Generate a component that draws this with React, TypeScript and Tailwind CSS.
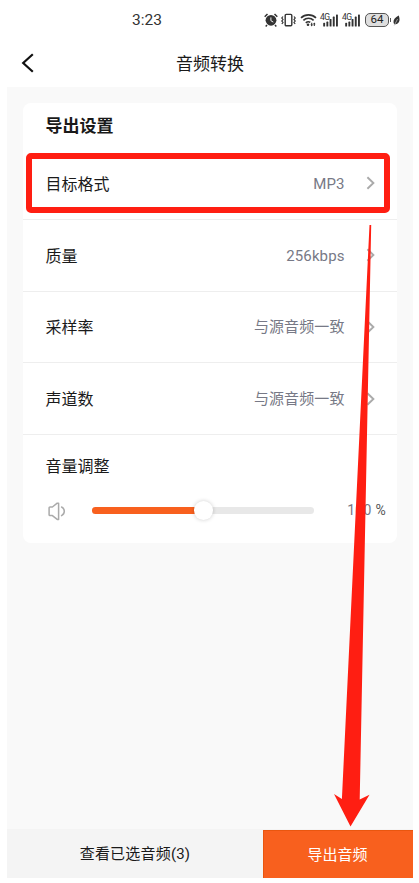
interface SettingRow {
  label: string;
  value: string;
}

const rows: SettingRow[] = [
  { label: '目标格式', value: 'MP3' },
  { label: '质量', value: '256kbps' },
  { label: '采样率', value: '与源音频一致' },
  { label: '声道数', value: '与源音频一致' }
];

function AlarmIcon() {
  return (
    <svg width="14" height="14" viewBox="0 0 14 14" fill="none">
      <circle cx="7" cy="7.3" r="5.4" fill="#333" />
      <path d="M0.7 3.8 3.5 1M13.3 3.8 10.5 1M3 12l-1.3 1.4M11 12l1.3 1.4" stroke="#333" strokeWidth="1.5" />
      <path d="M6.9 4.4v3.3l2.4 1.4" stroke="#eee" strokeWidth="1" />
    </svg>
  );
}

function VibrateIcon() {
  return (
    <svg width="15" height="14" viewBox="0 0 15 14" fill="none" stroke="#333">
      <rect x="4.2" y="1.4" width="6.6" height="11.4" rx="1" strokeWidth="1.4" />
      <path d="M2 3.5 .8 5 2 6.5.8 8 2 9.5.8 11M13 3.5 14.2 5 13 6.5 14.2 8 13 9.5l1.2 1.5" strokeWidth="1.2" />
    </svg>
  );
}

function WifiIcon() {
  return (
    <svg width="17" height="14" viewBox="0 0 17 14" fill="none" stroke="#333" strokeWidth="1.6">
      <path d="M1 4.9a10.7 10.7 0 0 1 15 0M3.4 7.4a7.2 7.2 0 0 1 10.2 0M5.8 9.8a4 4 0 0 1 4.5-.6" />
      <circle cx="8" cy="11.8" r="1.3" fill="#333" stroke="none" />
      <path d="M11.7 9.7v2.8M14.3 13v-2.8" strokeWidth="1.1" />
      <path d="m10.4 11.6 1.3 1.8 1.2-1.8zM13.1 11.2l1.2-1.8 1.3 1.8z" fill="#333" stroke="none" />
    </svg>
  );
}

function SignalIcon() {
  return (
    <div className="relative h-[14px] w-[19px]">
      <svg width="19" height="14" viewBox="0 0 19 14" fill="#333">
        <rect x="3.2" y="9.8" width="1.9" height="3.7" rx=".6" />
        <rect x="6.4" y="8.6" width="1.9" height="4.9" rx=".6" />
        <rect x="9.6" y="6" width="1.9" height="7.5" rx=".6" />
        <rect x="12.8" y="3.6" width="1.9" height="9.9" rx=".6" />
        <rect x="16" y="1.4" width="1.9" height="12.1" rx=".6" />
      </svg>
      <span className="absolute top-0 left-0 font-[Roboto,sans-serif] text-[8.5px] leading-[8px] tracking-[-0.6px] text-[#333]">4G</span>
    </div>
  );
}

function BatteryIcon() {
  return (
    <div className="flex items-center">
      <div className="flex h-[14px] w-6 items-center justify-center rounded-[5px] border border-[#555] bg-[#dedede] font-[Roboto,sans-serif] text-[11.5px] leading-none text-[#222]">
        64
      </div>
      <div className="ml-px h-1 w-px bg-[#555]" />
    </div>
  );
}

function LeafIcon() {
  return (
    <svg width="7" height="11" viewBox="0 0 7 11" fill="#333">
      <path d="M5.7.5C2.2 2.2.3 4.5.5 7.2c.1 1 .5 1.8 1 2.3C4.8 9.4 6.9 7 6.5 3.8 6.4 2.4 6 1.2 5.7.5z" />
      <path d="M1 10.8 4.6 4" stroke="#ccc" strokeWidth=".7" />
    </svg>
  );
}

function SpeakerIcon() {
  return (
    <svg width="18" height="20" viewBox="0 0 18 20" fill="none" stroke="#aaa" strokeWidth="1.5" strokeLinecap="round" strokeLinejoin="round">
      <path d="M10.6 2.2v16.2H9.2L4.4 14.6H2a.9.9 0 0 1-.9-.9V6.9A.9.9 0 0 1 2 6h2.4l4.8-3.8z" />
      <path d="M13.6 6c1.9 1 2.7 2.5 2.7 4.3s-.8 3.3-2.7 4.3" />
    </svg>
  );
}

function ChevronIcon() {
  return (
    <svg width="9" height="14" viewBox="0 0 9 14" fill="none" stroke="#aaa" strokeWidth="1.9">
      <path d="m1.4 1.2 6 5.8-6 5.8" />
    </svg>
  );
}

function StatusBar() {
  return (
    <div className="flex h-10 items-center pr-[19px] pl-[132px]">
      <span className="pt-px font-[Roboto,sans-serif] text-[15.5px] leading-none text-[#333]">3:23</span>
      <div className="ml-auto flex items-center">
        <AlarmIcon />
        <div className="ml-[3px]"><VibrateIcon /></div>
        <div className="ml-1"><WifiIcon /></div>
        <div className="ml-[3px]"><SignalIcon /></div>
        <div className="ml-[3px]"><SignalIcon /></div>
        <div className="ml-1"><BatteryIcon /></div>
        <div className="ml-[2px]"><LeafIcon /></div>
      </div>
    </div>
  );
}

function VolumeRow() {
  return (
    <div className="pt-[18px] pr-[11px] pl-[22.5px]">
      <div className="text-[16px] leading-6">音量调整</div>
      <div className="mt-[23px] flex h-5 items-center">
        <div className="ml-[2px] shrink-0 pt-px"><SpeakerIcon /></div>
        <div className="relative ml-[26.5px] h-[7px] w-[222px] shrink-0 rounded-full bg-[#e8e8e8]">
          <div className="h-full w-1/2 rounded-full bg-[#f8601e]" />
          <div className="absolute -top-[6px] left-[102px] size-[19px] rounded-full bg-white shadow-[0_0_4px_rgba(0,0,0,0.2)]" />
        </div>
        <span className="ml-auto font-[Roboto,sans-serif] text-[14px] leading-5 tracking-[0.3px] whitespace-nowrap text-[#777986]">
          100 <span className="text-[#555]">%</span>
        </span>
      </div>
    </div>
  );
}

export default function App() {
  return (
    <div className="relative flex h-[883px] w-[419px] flex-col overflow-hidden bg-white pb-[5px] font-['Noto_Sans_CJK_SC',sans-serif] text-[#1a1a1a]">
      <StatusBar />
      <header className="grid h-[47px] grid-cols-[1fr_auto_1fr] items-center pb-px pl-[21px]">
        <svg width="14" height="20" viewBox="0 0 14 20" fill="none" stroke="#111" strokeWidth="2.2">
          <path d="M11.8 1.2 2.2 10l9.6 8.8" />
        </svg>
        <h1 className="-ml-[20px] text-[17px] leading-6">音频转换</h1>
      </header>

      <main className="mr-[6px] ml-[7px] flex-1 bg-[#f9f9f9] px-4 pt-4">
        <section className="h-[440px] rounded-lg bg-white">
          <h2 className="h-[45px] px-[22.5px] pt-[10px] text-[17px] leading-6 font-bold">导出设置</h2>
          {rows.map((row) => (
            <div key={row.label} className="flex h-[71.75px] items-center border-b border-[#eee] pr-[22.5px] pl-[22.5px]">
              <span className="pb-px text-[16px] leading-6">{row.label}</span>
              <span className="ml-auto pt-px font-[Roboto,'Noto_Sans_CJK_SC',sans-serif] text-[15px] leading-6 tracking-[0.1px] text-[#777986]">{row.value}</span>
              <span className="ml-[21px]"><ChevronIcon /></span>
            </div>
          ))}
          <VolumeRow />
        </section>
      </main>

      <footer className="mr-[6px] ml-[7px] flex h-[49px] bg-[#f4f4f4] text-[15px]">
        <button className="w-64 pt-[2px] font-[Roboto,'Noto_Sans_CJK_SC',sans-serif] tracking-[0.2px]">查看已选音频(3)</button>
        <button className="mt-px flex-1 border-t border-l border-[#e9560f] bg-[#f8601e] pr-[2px] text-white">导出音频</button>
      </footer>

      <div className="absolute top-[153px] left-[26px] h-[60px] w-[364px] rounded-[5px] border-[6px] border-[#ff1e12]" />
      <svg className="absolute top-0 left-0" width="419" height="883" viewBox="0 0 419 883">
        <path d="M369.5 225h1.7L359.7 799.5l9.8-4.7-19 31.7L334 794l7.9 5z" fill="#ff1e12" />
      </svg>
    </div>
  );
}
